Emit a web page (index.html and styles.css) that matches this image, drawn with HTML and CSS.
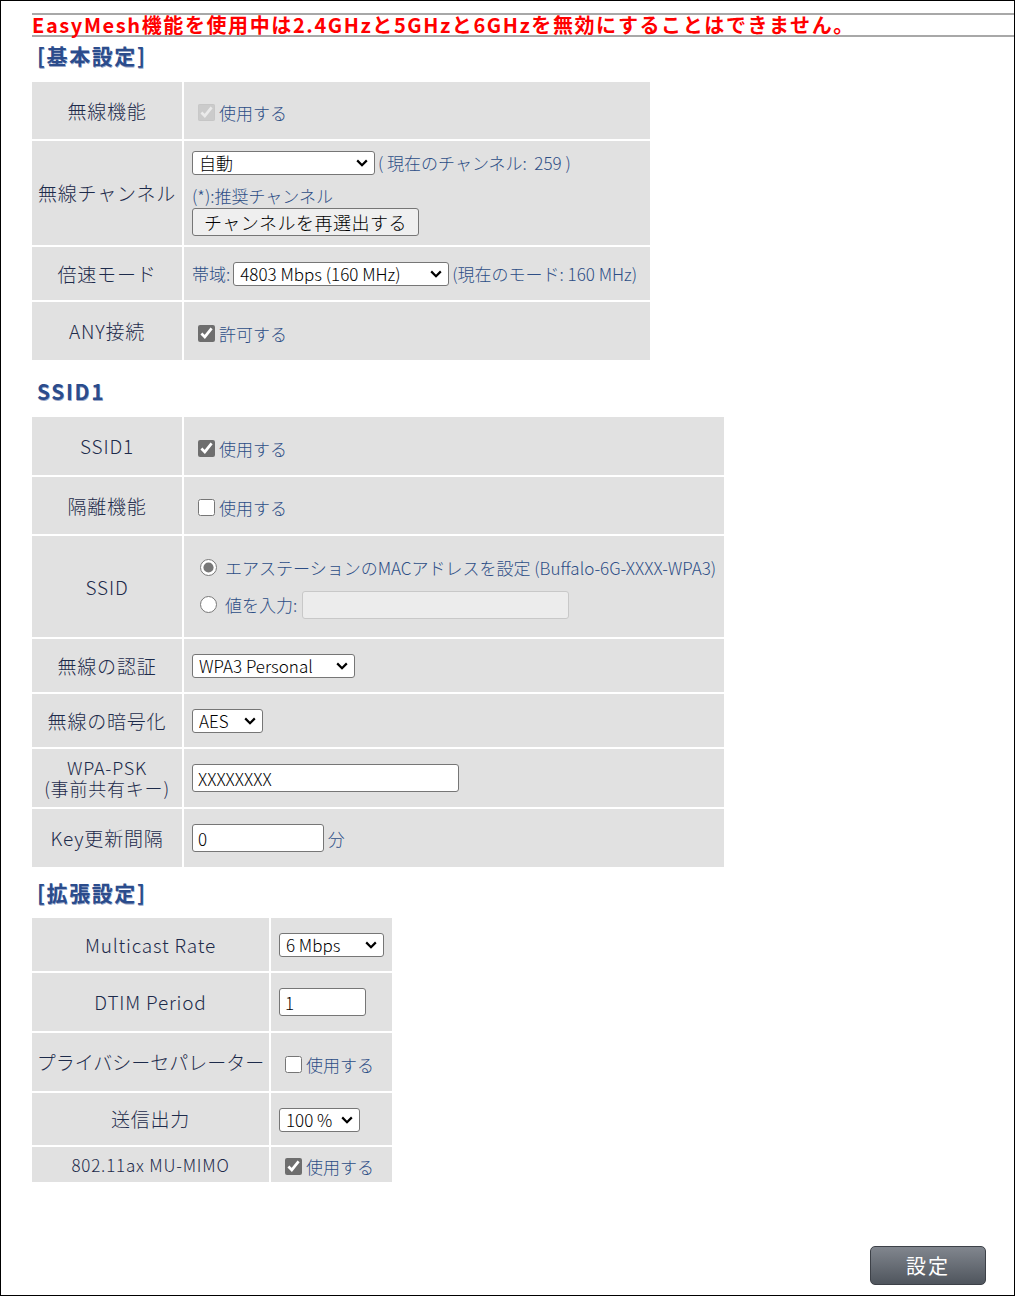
FILE: index.html
```html
<!DOCTYPE html>
<html lang="ja">
<head>
  <meta charset="UTF-8" />
  <meta name="viewport" content="width=device-width, initial-scale=1" />
  <title>無線設定 (6GHz)</title>
  <link rel="stylesheet" href="styles.css">
</head>
<body>
<div class="page">

  <p class="notice">EasyMesh機能を使用中は2.4GHzと5GHzと6GHzを無効にすることはできません。</p>

  <h2 class="sec">[基本設定]</h2>
  <table class="conf t-basic">
    <tr class="h59">
      <th>無線機能</th>
      <td><label class="chk"><input type="checkbox" checked disabled /> 使用する</label></td>
    </tr>
    <tr class="h106">
      <th>無線チャンネル</th>
      <td class="ch-cell">
        <div class="line">
          <select class="sel-ch"><option>自動</option></select>
          <span class="note">( 現在のチャンネル:&nbsp; 259 )</span>
        </div>
        <div class="hint">(*):推奨チャンネル</div>
        <button type="button" class="btn-small">チャンネルを再選出する</button>
      </td>
    </tr>
    <tr class="h55">
      <th>倍速モード</th>
      <td>
        <div class="line">
          <span class="note">帯域:</span>
          <select class="sel-bw"><option>4803 Mbps (160 MHz)</option></select><span class="note">(現在のモード: 160 MHz)</span>
        </div>
      </td>
    </tr>
    <tr class="h58">
      <th>ANY接続</th>
      <td><label class="chk"><input type="checkbox" checked /> 許可する</label></td>
    </tr>
  </table>

  <h2 class="sec sec-ssid">SSID1</h2>
  <table class="conf t-ssid">
    <tr class="h60">
      <th>SSID1</th>
      <td><label class="chk"><input type="checkbox" checked /> 使用する</label></td>
    </tr>
    <tr class="h59">
      <th>隔離機能</th>
      <td><label class="chk"><input type="checkbox" /> 使用する</label></td>
    </tr>
    <tr class="h103">
      <th>SSID</th>
      <td>
        <label class="rad"><input type="radio" name="ssid" checked /> エアステーションのMACアドレスを設定 (Buffalo-6G-XXXX-WPA3)</label>
        <label class="rad rad-2"><input type="radio" name="ssid" /> 値を入力:<input type="text" class="in-ssid" disabled /></label>
      </td>
    </tr>
    <tr class="h55">
      <th>無線の認証</th>
      <td><select class="sel-auth"><option>WPA3 Personal</option></select></td>
    </tr>
    <tr class="h55">
      <th>無線の暗号化</th>
      <td><select class="sel-enc"><option>AES</option></select></td>
    </tr>
    <tr class="h60">
      <th class="two">WPA-PSK<br>(事前共有キー)</th>
      <td><input type="text" class="in-psk" value="XXXXXXXX" /></td>
    </tr>
    <tr class="h58">
      <th>Key更新間隔</th>
      <td><input type="text" class="in-key" value="0" /> <span class="note">分</span></td>
    </tr>
  </table>

  <h2 class="sec sec-ext">[拡張設定]</h2>
  <table class="conf t-ext">
    <tr class="h55">
      <th>Multicast Rate</th>
      <td><select class="sel-mc"><option>6 Mbps</option></select></td>
    </tr>
    <tr class="h60">
      <th>DTIM Period</th>
      <td><input type="text" class="in-dtim" value="1" /></td>
    </tr>
    <tr class="h60">
      <th class="tight">プライバシーセパレーター</th>
      <td><label class="chk"><input type="checkbox" /> 使用する</label></td>
    </tr>
    <tr class="h54">
      <th>送信出力</th>
      <td><select class="sel-pw"><option>100 %</option></select></td>
    </tr>
    <tr class="h35">
      <th class="small">802.11ax MU-MIMO</th>
      <td><label class="chk"><input type="checkbox" checked /> 使用する</label></td>
    </tr>
  </table>

  <div class="foot">
    <button type="button" class="btn-apply">設定</button>
  </div>

</div>
</body>
</html>
```

FILE: styles.css
```css
* { box-sizing: border-box; }
body { margin: 0; font-family: "Noto Sans CJK JP", "Noto Sans", sans-serif; background: #fff; }
.page { border: 1px solid #000; height: 1296px; padding-left: 31px; display: flex; flex-direction: column; align-items: flex-start; }

.notice { align-self: stretch; margin: 12px 0 0; border-top: 2px solid #a8a8a8; border-bottom: 2px solid #a8a8a8; color: #ff0000; font-weight: bold; font-size: 20px; line-height: 20px; height: 24px; letter-spacing: 1.6px; white-space: nowrap; }

.sec { margin: 6px 0 14px; padding-left: 5px; font-size: 21px; line-height: 25px; font-weight: bold; color: #2b4c8c; letter-spacing: 1.6px; text-shadow: 0.5px 0.5px 0 #9aa8c8; }
.sec-ssid { margin-top: 19px; margin-bottom: 13px; }
.sec-ext { margin-top: 13px; margin-bottom: 13px; }

.conf { border-collapse: separate; border-spacing: 0; background: #e1e1e1; }
.conf th, .conf td { border-bottom: 2px solid #fff; padding: 0; vertical-align: middle; }
.conf tr:last-child th, .conf tr:last-child td { border-bottom: 0; }
.conf th { border-right: 2px solid #fff; font-weight: 300; font-size: 19px; color: #1d2b4b; text-align: center; letter-spacing: 0.8px; line-height: 22px; white-space: nowrap; }
.conf th.two { font-size: 18px; line-height: 21px; }
.conf th.tight { letter-spacing: 0; }
.conf td { padding-left: 8px; font-size: 17px; color: #2d4e86; font-weight: 300; }
.conf th.small { font-size: 17px; }

.t-basic { width: 618px; }
.t-basic th, .t-ssid th { width: 152px; }
.t-ssid { width: 692px; }
.t-ext { width: 360px; }
.t-ext th { width: 239px; }

.h35 { height: 35px; }
.h54 { height: 54px; }
.h55 { height: 55px; }
.h58 { height: 58px; }
.h59 { height: 59px; }
.h60 { height: 60px; }
.h103 { height: 103px; }
.h106 { height: 106px; }

.chk, .rad { display: flex; align-items: center; gap: 4px; }
.chk { padding-top: 4px; }
.chk input { width: 17px; height: 17px; margin: 0 0 0 6px; accent-color: #6e6e6e; }
.rad-2 { margin-top: 11px; }
.rad input[type=radio] { width: 17px; height: 17px; margin: 0 4px 0 8px; accent-color: #777; }

select, input[type=text] { font-family: "Noto Sans CJK JP", "Noto Sans", sans-serif; font-size: 17px; font-weight: 300; color: #000; border: 1px solid #767676; border-radius: 3px; background-color: #fff; }
select { appearance: none; height: 24px; line-height: 20px; padding: 0 22px 0 6px; background-image: url("data:image/svg+xml,%3Csvg xmlns='http://www.w3.org/2000/svg' width='12' height='8' viewBox='0 0 12 8'%3E%3Cpath d='M1.2 1.4 6 6.2 10.8 1.4' fill='none' stroke='%23000' stroke-width='2.2'/%3E%3C/svg%3E"); background-repeat: no-repeat; background-position: right 6px center; }
input[type=text] { height: 28px; padding: 0 5px; }

.line { display: flex; align-items: center; gap: 3px; }
.ch-cell { padding-top: 3px; }
.sel-ch { width: 183px; }
.hint { margin-top: 11px; line-height: 20px; }
.btn-small { display: block; margin-top: 2px; font-family: inherit; font-size: 18px; font-weight: 300; height: 28px; width: 227px; padding: 0; background: #efefef; border: 1px solid #767676; border-radius: 3px; color: #000; letter-spacing: 0.5px; }
.sel-bw { width: 216px; }
.sel-auth { width: 163px; }
.sel-enc { width: 71px; }
input.in-ssid { width: 267px; background-color: #ececec; border-color: #c8c8c8; margin-left: 1px; }
.in-psk { width: 267px; }
.in-key { width: 132px; }
.sel-mc { width: 105px; }
.in-dtim { width: 87px; }
.sel-pw { width: 81px; }

.foot { margin-top: auto; align-self: stretch; display: flex; justify-content: flex-end; padding: 0 28px 10px 0; }
.btn-apply { width: 116px; height: 39px; font-family: inherit; font-size: 20px; letter-spacing: 2px; color: #fff; border: 1px solid #3d4148; border-radius: 5px; background: linear-gradient(#81868e, #4f555d); }
```
